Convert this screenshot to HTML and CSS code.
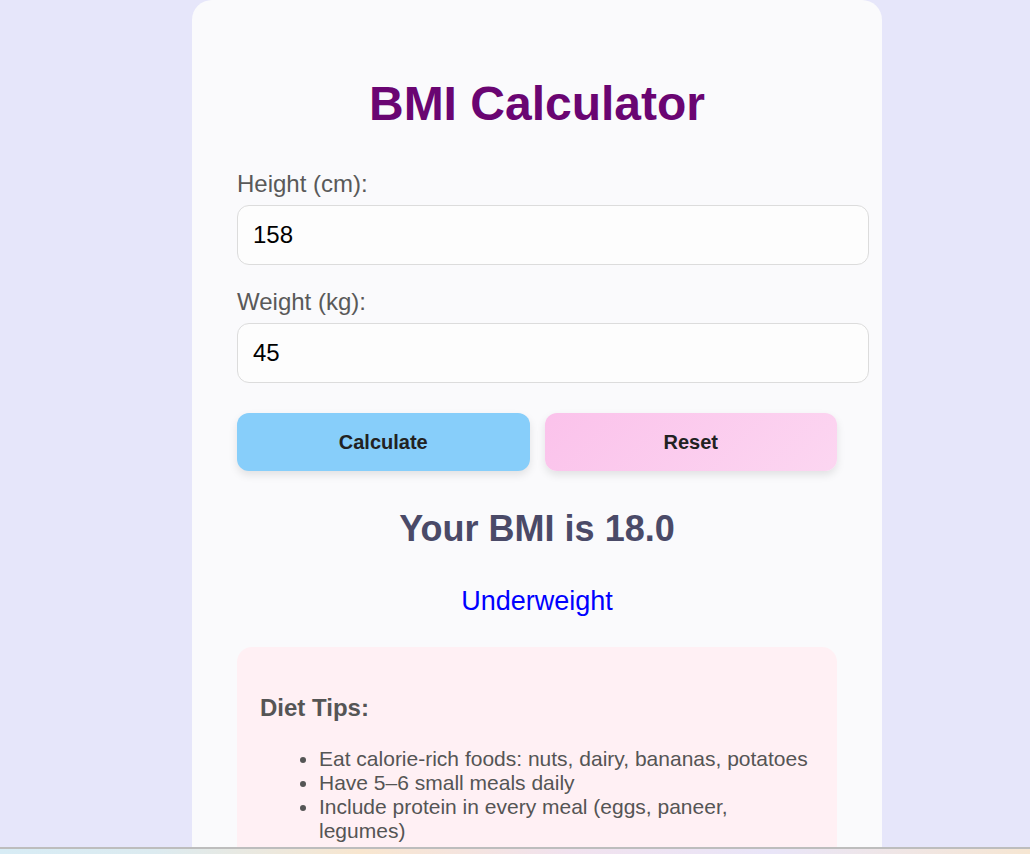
FILE: index.html
```html
<!DOCTYPE html>
<html lang="en">
<head>
<meta charset="utf-8">
<title>BMI Calculator</title>
<link rel="stylesheet" href="styles.css">
</head>
<body>
  <main class="card">
    <h1 class="title">BMI Calculator</h1>
    <label class="field-label" for="height">Height (cm):</label>
    <input class="field-input" id="height" type="number" value="158">
    <label class="field-label" for="weight">Weight (kg):</label>
    <input class="field-input" id="weight" type="number" value="45">
    <div class="actions">
      <button class="btn btn-calc" type="button">Calculate</button>
      <button class="btn btn-reset" type="button">Reset</button>
    </div>
    <h2 class="result">Your BMI is 18.0</h2>
    <p class="status">Underweight</p>
    <section class="tips">
      <h3 class="tips-title">Diet Tips:</h3>
      <ul class="tips-list">
        <li>Eat calorie-rich foods: nuts, dairy, bananas, potatoes</li>
        <li>Have 5–6 small meals daily</li>
        <li>Include protein in every meal (eggs, paneer, legumes)</li>
      </ul>
    </section>
  </main>
  <div class="bottom-strip"></div>
</body>
</html>
```
FILE: styles.css
```css
html, body {
  margin: 0;
  padding: 0;
}
body {
  background: #e6e6fa;
  font-family: "Liberation Sans", Arial, sans-serif;
  display: flex;
  justify-content: center;
  align-items: flex-start;
  padding-left: 44px;
  height: 854px;
  overflow: hidden;
}
.card {
  width: 600px;
  padding: 45px 45px 60px;
  background: #fafafc;
  border-radius: 20px;
  display: flex;
  flex-direction: column;
  align-items: stretch;
  flex-shrink: 0;
}
.title {
  margin: 31px 0 41px;
  font-size: 48px;
  font-weight: bold;
  color: #6a0572;
  text-align: center;
}
.field-label {
  display: block;
  font-size: 24px;
  line-height: 24px;
  color: #595959;
  margin-bottom: 9px;
}
.field-input {
  box-sizing: border-box;
  width: 632px;
  height: 60px;
  padding: 0 15px;
  margin: 0 0 25px;
  border: 1px solid #dcdcdc;
  border-radius: 12px;
  background: #fdfdfd;
  font-family: "Liberation Sans", Arial, sans-serif;
  font-size: 24px;
  color: #000;
  outline: none;
  -moz-appearance: textfield;
}
.field-input::-webkit-inner-spin-button,
.field-input::-webkit-outer-spin-button {
  -webkit-appearance: none;
  margin: 0;
}
.actions {
  display: flex;
  gap: 15px;
  margin-top: 5px;
}
.btn {
  flex: 1;
  height: 58px;
  border: none;
  border-radius: 12px;
  font-family: "Liberation Sans", Arial, sans-serif;
  font-size: 20px;
  font-weight: bold;
  color: #222;
  box-shadow: 0 4px 8px rgba(0, 0, 0, 0.1);
  cursor: pointer;
}
.btn-calc {
  background: #87cefa;
}
.btn-reset {
  background: linear-gradient(135deg, #fbc2eb 0%, #fcd6f1 100%);
}
.result {
  margin: 37px 0 0;
  font-size: 36px;
  font-weight: bold;
  color: #4a4a68;
  text-align: center;
}
.status {
  margin: 36px 0 0;
  font-size: 27px;
  color: #0000ff;
  text-align: center;
}
.tips {
  margin-top: 30px;
  padding: 23px;
  background: #fff0f4;
  border-radius: 15px;
  color: #555;
}
.tips-title {
  margin: 24px 0 25px;
  font-size: 24px;
  font-weight: bold;
  color: #555;
}
.tips-list {
  margin: 0;
  padding-left: 59px;
  font-size: 21px;
  line-height: 24px;
  color: #555;
}
.bottom-strip {
  position: fixed;
  left: 0;
  right: 0;
  bottom: 0;
  height: 5px;
  border-top: 2px solid #bdbdbd;
  background: linear-gradient(90deg, #d7ecf5 0%, #dcebf0 15%, #f8e6cf 35%, #f1e2ee 55%, #e9e5f8 75%, #f6e6d2 100%);
}
```
